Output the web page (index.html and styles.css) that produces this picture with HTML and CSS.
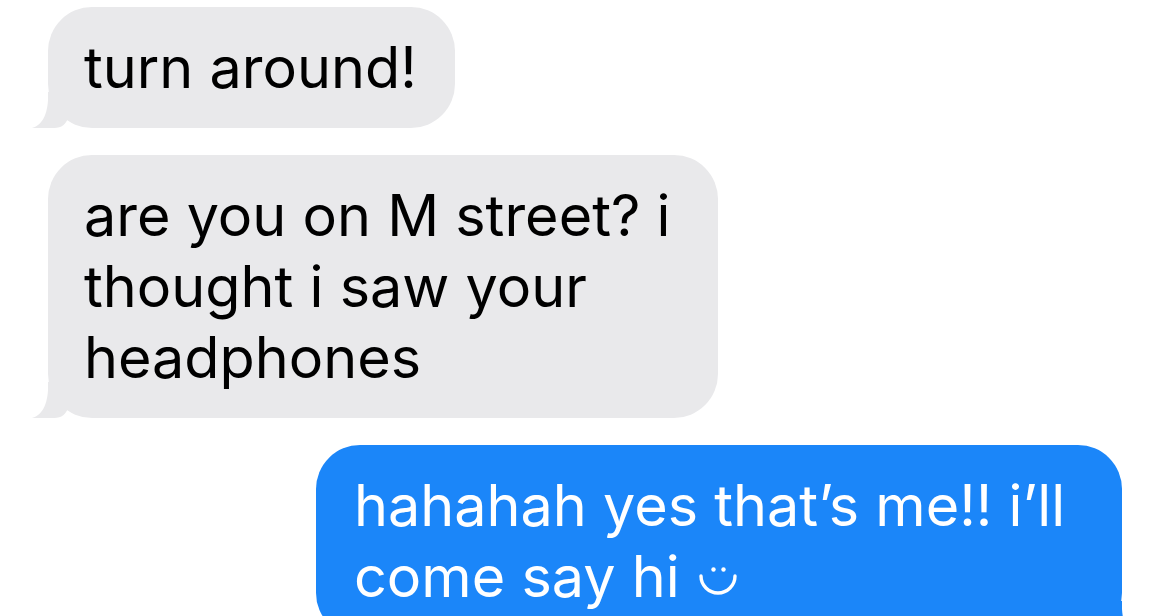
FILE: index.html
```html
<!DOCTYPE html>
<html lang="en">
<head>
  <meta charset="UTF-8">
  <meta name="viewport" content="width=device-width, initial-scale=1">
  <title>Messages</title>
  <link rel="stylesheet" href="styles.css">
</head>
<body>

  <div class="thread">
    <!-- incoming -->
    <div class="msg in short">
      <p>turn around!</p>
      <svg class="tail" viewBox="0 0 40 40"><path d="M0 40 C8 38 15 30 16 12 L16 4 L36 4 L36 30 C34 36 30 40 22 40 Z"/></svg>
    </div>

    <div class="msg in long">
      <p>are you on M street? i<br>thought i saw your<br>headphones</p>
      <svg class="tail" viewBox="0 0 40 40"><path d="M0 40 C8 38 15 30 16 12 L16 4 L36 4 L36 30 C34 36 30 40 22 40 Z"/></svg>
    </div>

    <!-- outgoing -->
    <div class="msg out reply">
      <p>hahahah yes that’s me!! i’ll<br>come say hi <svg class="smiley" viewBox="0 0 40 34"><path d="M3 12 A17 17 0 0 0 37 12" fill="none" stroke="currentColor" stroke-width="3.4" stroke-linecap="round"/><circle cx="15.5" cy="5.5" r="2.2"/><circle cx="25.5" cy="5.5" r="2.2"/></svg></p>
      <svg class="tail" viewBox="0 0 40 40"><path d="M0 40 C8 38 15 30 16 12 L16 4 L36 4 L36 30 C34 36 30 40 22 40 Z"/></svg>
    </div>
  </div>

</body>
</html>
```

FILE: styles.css
```css
body {
  margin: 0;
  background-color: #fff;
  font-family: Inter, "Noto Sans", sans-serif;
  overflow: hidden;
}
.thread {
  display: flex;
  flex-direction: column;
  gap: 27px;
  padding: 7px 48px 0;
}
.msg {
  position: relative;
  box-sizing: border-box;
  padding: 25px 36px;
  border-radius: 44px;
  font-size: 57.5px;
  line-height: 71px;
}
.msg p {
  margin: 0;
}
.in {
  align-self: flex-start;
  background-color: #e9e9eb;
  color: #000;
}
.out {
  align-self: flex-end;
  background-color: #1b86f9;
  color: #fff;
}
.short {
  width: 407px;
}
.long {
  width: 670px;
}
.reply {
  width: 806px;
  padding-left: 38px;
}
.tail {
  position: absolute;
  bottom: 0;
  left: -16px;
  width: 40px;
  height: 40px;
}
.in .tail {
  fill: #e9e9eb;
}
.out .tail {
  left: auto;
  right: -16px;
  fill: #1b86f9;
  transform: scaleX(-1);
}
.smiley {
  width: 40px;
  height: 34px;
  margin-left: 2px;
  vertical-align: -1px;
  fill: currentColor;
}
```
